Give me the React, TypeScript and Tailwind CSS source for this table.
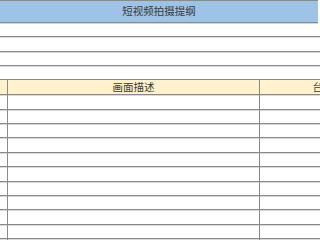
const rows = Array.from({ length: 11 });

const App = () => {
  return (
    <div
      className="w-[320px] h-[240px] overflow-hidden bg-white text-[#3a3a3a] text-[10.5px]"
      style={{ fontFamily: '"Noto Sans CJK SC", "Noto Sans", sans-serif' }}
    >
      <div className="w-[400px]">
        <div className="h-[23px] border-t border-[#8a8a8a] border-b bg-[#9dc3e6] flex items-center w-[318px] justify-center shadow-[0_1px_0_#d4d4d4]">
          <span className="leading-none">短视频拍摄提纲</span>
        </div>
        {[0, 1, 2, 3].map((i) => (
          <div
            key={i}
            className="h-[14.3px] border-b border-[#8a8a8a] shadow-[0_1px_0_#d9d9d9]"
          />
        ))}
        <div className="flex h-[15px] border-b border-[#8a8a8a] bg-[#fff2cc] shadow-[0_1px_0_#d9d9d9]">
          <div className="w-[8px] border-r border-[#8a8a8a]" />
          <div className="w-[252px] border-r border-[#8a8a8a] flex items-center justify-center">
            <span className="leading-none">画面描述</span>
          </div>
          <div className="w-[126px] flex items-center justify-center">
            <span className="leading-none">台词</span>
          </div>
        </div>
        {rows.map((_, i) => (
          <div
            key={i}
            className="flex h-[14.4px] border-b border-[#8a8a8a] shadow-[0_1px_0_#d9d9d9]"
          >
            <div className="w-[8px] border-r border-[#8a8a8a]" />
            <div className="w-[252px] border-r border-[#8a8a8a]" />
            <div className="w-[126px]" />
          </div>
        ))}
      </div>
    </div>
  );
};

export default App;
